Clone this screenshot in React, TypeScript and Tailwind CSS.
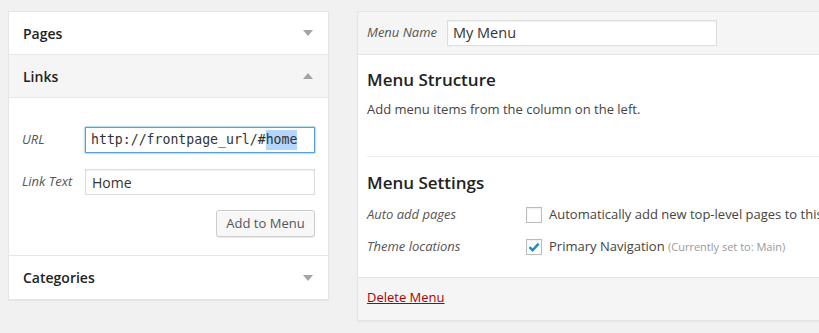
import React from 'react';

const font = { fontFamily: '"Open Sans", "Noto Sans", sans-serif' };

// small grey triangle used in the accordion headers
const Arrow: React.FC<{ up?: boolean }> = ({ up }) => (
  <svg width="10" height="6" viewBox="0 0 10 6" className="text-[#a0a5aa]">
    {up ? <path d="M5 0 L10 6 L0 6 Z" fill="currentColor" /> : <path d="M0 0 L10 0 L5 6 Z" fill="currentColor" />}
  </svg>
);

const Section: React.FC<{ title: string; open?: boolean; last?: boolean }> = ({ title, open, last }) => (
  <div
    className={`flex h-[43px] items-center justify-between pl-[14px] pr-[15px] ${last ? '' : 'border-b border-[#e5e5e5]'} ${open ? 'bg-[#f5f5f5]' : 'bg-white'}`}
  >
    <h3 className="text-[14px] font-semibold text-[#222]">{title}</h3>
    <Arrow up={open} />
  </div>
);

const Checkbox: React.FC<{ checked?: boolean }> = ({ checked }) => (
  <span className="flex h-[16px] w-[16px] shrink-0 items-center justify-center border border-[#bbb] bg-white shadow-[inset_0_1px_2px_rgba(0,0,0,0.07)]">
    {checked && (
      <svg width="12" height="12" viewBox="0 0 12 12">
        <path d="M1.5 6.2 L4.6 9.2 L10.6 2.6" fill="none" stroke="#1e8cbe" strokeWidth="2.4" />
      </svg>
    )}
  </span>
);

export default function App() {
  return (
    <div className="flex h-[333px] w-[819px] gap-[28px] overflow-hidden bg-[#f1f1f1] pl-[8px] pt-[11px] text-[13px] text-[#444]" style={font}>
      {/* left column: accordion of item sources */}
      <div className="h-[289px] w-[321px] shrink-0 border border-[#e5e5e5] bg-white shadow-[0_1px_1px_rgba(0,0,0,0.04)]">
        <Section title="Pages" />
        <Section title="Links" open />
        <div className="border-b border-[#e5e5e5] pl-[13px] pr-[13px] pt-[29px] pb-[18px]">
          <div className="flex items-center">
            <label className="w-[63px] italic text-[#555]">URL</label>
            <div className="flex h-[26px] flex-1 items-center border border-[#5b9dd9] px-[5px] text-[13.2px] text-[#333] shadow-[0_0_2px_rgba(30,140,190,0.8)]" style={{ fontFamily: '"DejaVu Sans Mono", monospace' }}>
              http://frontpage_url/#<span className="bg-[#b4d5fe]">home</span>
            </div>
          </div>
          <div className="mt-[16px] flex items-center">
            <label className="w-[63px] italic text-[#555]">Link Text</label>
            <div className="flex h-[26px] flex-1 items-center border border-[#ddd] px-[6px] text-[14px] text-[#333] shadow-[inset_0_1px_2px_rgba(0,0,0,0.07)]">
              Home
            </div>
          </div>
          <div className="mt-[15px] flex justify-end">
            <button className="h-[27px] w-[99px] rounded-[3px] border border-[#ccc] bg-[#f7f7f7] text-[13px] text-[#555] shadow-[inset_0_1px_0_#fff,0_1px_0_rgba(0,0,0,0.08)]">
              Add to Menu
            </button>
          </div>
        </div>
        <Section title="Categories" last />
      </div>

      {/* right column: menu editor */}
      <div className="h-[310px] flex-1 border border-r-0 border-[#e5e5e5] bg-white shadow-[0_1px_1px_rgba(0,0,0,0.04)]">
        <div className="flex h-[43px] items-center border-b border-[#e5e5e5] bg-[#f5f5f5] pl-[9px]">
          <label className="w-[80px] italic text-[#555]">Menu Name</label>
          <div className="flex h-[26px] w-[270px] items-center border border-[#ddd] bg-white px-[5px] text-[14.5px] text-[#333] shadow-[inset_0_1px_2px_rgba(0,0,0,0.07)]">
            My Menu
          </div>
        </div>

        <div className="h-[223px] border-b border-[#e5e5e5] pl-[9px] pt-[13px]">
          <h2 className="text-[17px] font-semibold leading-[24px] text-[#222]">Menu Structure</h2>
          <p className="mt-[7px] leading-[20px] text-[#444]">Add menu items from the column on the left.</p>
          <div className="mt-[37px] border-t border-[#eee]" />
          <h2 className="mt-[14px] text-[17px] font-semibold leading-[24px] text-[#222]">Menu Settings</h2>
          <dl className="mt-[10px]">
            <div className="flex h-[20px] items-center">
              <dt className="w-[159px] italic text-[#555]">Auto add pages</dt>
              <dd className="flex items-center gap-[7px] whitespace-nowrap">
                <Checkbox />
                <span>Automatically add new top-level pages to this menu</span>
              </dd>
            </div>
            <div className="mt-[12px] flex h-[20px] items-center">
              <dt className="w-[159px] italic text-[#555]">Theme locations</dt>
              <dd className="flex items-center gap-[7px] whitespace-nowrap">
                <Checkbox checked />
                <span>
                  Primary Navigation <span className="text-[11px] text-[#999]">(Currently set to: Main)</span>
                </span>
              </dd>
            </div>
          </dl>
        </div>

        <div className="flex h-[42px] items-center bg-[#f5f5f5] pl-[9px] pb-[3px]">
          <a href="#" className="text-[#a00] underline">Delete Menu</a>
        </div>
      </div>
    </div>
  );
}
